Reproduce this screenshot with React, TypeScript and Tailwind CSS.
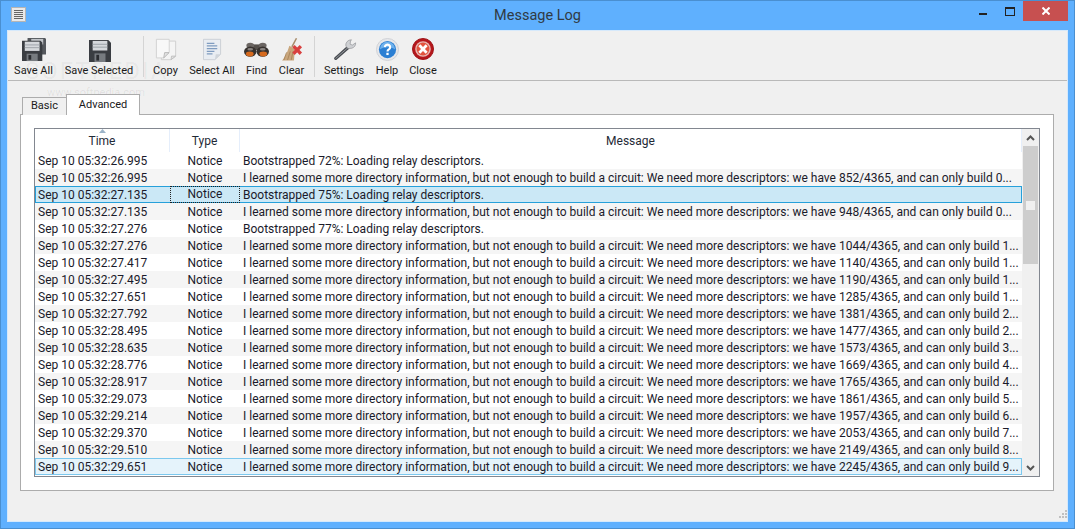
import React from "react";

const long = (have: number, build: number) =>
  `I learned some more directory information, but not enough to build a circuit: We need more descriptors: we have ${have}/4365, and can only build ${build}...`;

const rows: [string, string][] = [
  ["26.995", "Bootstrapped 72%: Loading relay descriptors."],
  ["26.995", long(852, 0)],
  ["27.135", "Bootstrapped 75%: Loading relay descriptors."],
  ["27.135", long(948, 0)],
  ["27.276", "Bootstrapped 77%: Loading relay descriptors."],
  ["27.276", long(1044, 1)],
  ["27.417", long(1140, 1)],
  ["27.495", long(1190, 1)],
  ["27.651", long(1285, 1)],
  ["27.792", long(1381, 2)],
  ["28.495", long(1477, 2)],
  ["28.635", long(1573, 3)],
  ["28.776", long(1669, 4)],
  ["28.917", long(1765, 4)],
  ["29.073", long(1861, 5)],
  ["29.214", long(1957, 6)],
  ["29.370", long(2053, 7)],
  ["29.510", long(2149, 8)],
  ["29.651", long(2245, 9)],
];

function Floppy() {
  return (
    <svg className="ml-[2px] mb-[1px]" width="22" height="23" viewBox="0 0 24 24" preserveAspectRatio="none">
      <path d="M0 1h21l3 3v20H0z" fill="#3a3d42" />
      <rect x="4" y="2" width="16" height="10" fill="#d5d8dc" />
      <rect x="4" y="5" width="16" height="1" fill="#9aa0a6" />
      <rect x="4" y="8" width="16" height="1" fill="#9aa0a6" />
      <rect x="6" y="15" width="12" height="9" fill="#777b80" />
      <rect x="8" y="16.500" width="3" height="6" fill="#2a2c30" />
    </svg>
  );
}

function SaveAllIcon() {
  return (
    <svg className="mb-[1px]" width="24" height="24" viewBox="0 0 26 26" preserveAspectRatio="none">
      <path d="M6 0h19l1 1v17H6z" fill="#55585d" />
      <rect x="10" y="1" width="13" height="6" fill="#c2c5c9" />
      <path d="M0 3h20l2 2v20H0z" fill="#3a3d42" />
      <rect x="3" y="4" width="16" height="10" fill="#d5d8dc" />
      <rect x="3" y="7" width="16" height="1" fill="#9aa0a6" />
      <rect x="3" y="10" width="16" height="1" fill="#9aa0a6" />
      <rect x="5" y="17" width="12" height="8" fill="#777b80" />
      <rect x="7" y="18.500" width="3" height="5" fill="#2a2c30" />
    </svg>
  );
}

function CopyIcon() {
  return (
    <svg className="mb-[2px]" width="22" height="23" viewBox="0 0 24 26" preserveAspectRatio="none">
      <path d="M7 3.500h15.500v17l-5 4H7z" fill="#f4f4f4" stroke="#cdcdcd" />
      <path d="M1.500 1.500h14v14l-6 7h-8z" fill="#f8f8f8" stroke="#cfcfcf" />
      <path d="M9.500 22.500l1-6h5z" fill="#e2e2e2" stroke="#b5b5b5" />
      <path d="M17.500 24.500l.5-4h4.500z" fill="#e2e2e2" stroke="#bdbdbd" />
    </svg>
  );
}

function SelectAllIcon() {
  return (
    <svg className="mb-[2px]" width="19" height="23" viewBox="0 0 20 26" preserveAspectRatio="none">
      <path d="M.5 1.500h18v17l-6 6H.5z" fill="#e9edf2" stroke="#c9ced4" />
      <path d="M12.500 24.500l1-6h5z" fill="#cfd4da" />
      <path d="M4 6h8M4 9h11M4 12h11M4 15h8M4 18h6" stroke="#7f9cc0" strokeWidth="1.400" />
    </svg>
  );
}

function FindIcon() {
  return (
    <svg className="mb-[5px]" width="25" height="16" viewBox="0 0 26 20" preserveAspectRatio="none">
      <path d="M9 3h8v7H9z" fill="#55504c" />
      <ellipse cx="6.500" cy="4.500" rx="4" ry="3.500" fill="#6b6663" />
      <ellipse cx="19.500" cy="4.500" rx="4" ry="3.500" fill="#6b6663" />
      <circle cx="6.500" cy="12" r="6.500" fill="#37322f" />
      <circle cx="19.500" cy="12" r="6.500" fill="#37322f" />
      <ellipse cx="6" cy="15" rx="4" ry="3" fill="#d66a1e" />
      <ellipse cx="20" cy="15" rx="4" ry="3" fill="#d66a1e" />
      <ellipse cx="6.500" cy="9" rx="3" ry="1.500" fill="#8a8582" />
      <ellipse cx="19.500" cy="9" rx="3" ry="1.500" fill="#8a8582" />
    </svg>
  );
}

function ClearIcon() {
  return (
    <svg className="mb-[2px] ml-[3px]" width="23" height="23" viewBox="0 0 25 24" preserveAspectRatio="none">
      <path d="M15 0l1.500.6-5 9-1.500-.8z" fill="#a98d6c" />
      <path d="M8 8l6 3.500-1 12H0c3-3 6-9 8-15.500z" fill="#c9a67c" />
      <path d="M5 15l-3 8M9 14l-3 9M12 14l-2 9" stroke="#a9855c" />
      <path d="M12.500 8.500l8 8M20.500 8.500l-8 8" stroke="#d9403f" strokeWidth="3.600" />
    </svg>
  );
}

function SettingsIcon() {
  return (
    <svg className="mb-[2px] ml-[1px]" width="24" height="23" viewBox="0 0 26 26" preserveAspectRatio="none">
      <path d="M3 23L16 11" stroke="#4a4d52" strokeWidth="3.600" strokeLinecap="round" />
      <path d="M3 23L16 11" stroke="#9a9ea4" strokeWidth="1" strokeLinecap="round" />
      <path d="M20 2a6 6 0 0 0-6 7.500l2.500 2.500 4-.5a6 6 0 0 0 4-6l-3.500 2.500-2.500-1 .5-3.500z" fill="#cfd1d4" stroke="#8a8d91" strokeWidth=".7" />
    </svg>
  );
}

function HelpIcon() {
  return (
    <svg className="mb-[2px]" width="23" height="23" viewBox="0 0 24 24">
      <circle cx="12" cy="12" r="11.500" fill="#e6e7ea" stroke="#cfd1d5" />
      <circle cx="12" cy="12" r="9" fill="#2b7fd3" />
      <path d="M4 12a8 8 0 0 1 16 0c-4-3-12-3-16 0z" fill="#6fb1ec" />
      <path d="M9.200 9.500a2.800 2.600 0 1 1 4.200 2.300c-1 .7-1.400 1.100-1.400 2.200" fill="none" stroke="#fff" strokeWidth="2.200" />
      <rect x="10.800" y="15.400" width="2.400" height="2.400" fill="#fff" />
    </svg>
  );
}

function CloseIcon() {
  return (
    <svg className="mb-[3px]" width="22" height="22" viewBox="0 0 24 24">
      <circle cx="12" cy="12" r="11.500" fill="#b5161b" stroke="#9c1216" />
      <circle cx="12" cy="12" r="8.500" fill="#e7b9b5" />
      <circle cx="12" cy="12" r="7" fill="#e2533e" />
      <path d="M8 8l8 8M16 8l-8 8" stroke="#fff" strokeWidth="3" />
    </svg>
  );
}

function ToolButton({ label, width, icon }: { label: string; width: string; icon: React.ReactNode }) {
  return (
    <div className={`${width} flex flex-col items-center`}>
      <div className="h-[27px] flex items-end justify-center">{icon}</div>
      <span className="text-[11px] leading-[16px] text-[#1a1a1a] whitespace-nowrap">{label}</span>
    </div>
  );
}

export default function App() {
  return (
    <div
      className="relative w-[1075px] h-[529px] overflow-hidden bg-[#5fb0fe] border border-[#4a8fd0] flex flex-col"
      style={{ fontFamily: 'Roboto, "Noto Sans", sans-serif' }}
    >
      {/* Title bar */}
      <div className="relative h-[29px] shrink-0 flex items-center justify-center">
        <div className="absolute left-[10px] top-[6px] w-[15px] h-[15px] bg-[#e9e9e9] border border-[#b5b5b5] flex flex-col items-center justify-center gap-[1px]">
          <div className="w-[9px] h-[1px] bg-[#666]" />
          <div className="w-[9px] h-[1px] bg-[#666]" />
          <div className="w-[9px] h-[1px] bg-[#666]" />
          <div className="w-[9px] h-[1px] bg-[#666]" />
          <div className="w-[9px] h-[1px] bg-[#666]" />
        </div>
        <span className="text-[14.500px] text-[#303a44] mt-[1px]">Message Log</span>
        <div className="absolute left-[978px] top-[12px] w-[8px] h-[2px] bg-[#222]" />
        <div className="absolute left-[1004px] top-[6px] w-[10px] h-[9px] border border-[#222] border-t-[2px]" />
        <div className="absolute left-[1022px] top-0 w-[45px] h-[20px] bg-[#c75050] flex items-center justify-center">
          <svg width="8" height="8" viewBox="0 0 8 8">
            <path d="M.5.5l7 7M7.500.5l-7 7" stroke="#fff" strokeWidth="2" />
          </svg>
        </div>
      </div>

      {/* Client area */}
      <div className="mx-[6px] mb-[6px] flex-1 min-h-0 bg-[#f0f0f0] border border-[#d6e9fb] flex flex-col">
        {/* Toolbar */}
        <div className="h-[50px] shrink-0 border-b border-[#b9b9b9] flex pt-[5px]">
          <ToolButton label="Save All" width="w-[51px]" icon={<SaveAllIcon />} />
          <ToolButton label="Save Selected" width="w-[80px]" icon={<Floppy />} />
          <div className="w-[1px] h-[41px] bg-[#d4d4d4] ml-[4px] mr-[3px]" />
          <ToolButton label="Copy" width="w-[37px]" icon={<CopyIcon />} />
          <ToolButton label="Select All" width="w-[56px]" icon={<SelectAllIcon />} />
          <ToolButton label="Find" width="w-[33px]" icon={<FindIcon />} />
          <ToolButton label="Clear" width="w-[37px]" icon={<ClearIcon />} />
          <div className="w-[1px] h-[41px] bg-[#d4d4d4] ml-[4px] mr-[3px]" />
          <ToolButton label="Settings" width="w-[52px]" icon={<SettingsIcon />} />
          <ToolButton label="Help" width="w-[34px]" icon={<HelpIcon />} />
          <ToolButton label="Close" width="w-[38px]" icon={<CloseIcon />} />
        </div>

        {/* Tabs */}
        <div className="flex-1 min-h-0 pl-[12px] pr-[13px] pt-[12px] pb-[30px] flex flex-col">
          <div className="relative z-10 h-[21px] shrink-0 flex items-end pl-[2px]">
            <div className="w-[45px] h-[18px] -mb-[1px] bg-[#f0f0f0] border border-[#acacac] border-b-0 text-[11px] leading-[16px] text-center text-[#1a1a1a]">
              Basic
            </div>
            <div className="-ml-[1px] w-[74px] h-[21px] -mb-[1px] bg-white border border-[#acacac] border-b-0 text-[11px] leading-[20px] text-center text-[#1a1a1a]">
              Advanced
            </div>
          </div>
          <div className="flex-1 min-h-0 bg-white border border-[#acacac] p-[13px]">
            {/* Log table */}
            <div className="h-full border border-[#828790] flex text-[12px] text-[#1a1a2a]">
              <div className="flex-1 min-w-0 flex flex-col">
                <div className="relative h-[23px] shrink-0 flex leading-[23px] text-[#1f2a36]">
                  <div className="w-[135px] border-r border-[#e5eefb] text-center pt-[1px]">Time</div>
                  <div className="w-[70px] border-r border-[#e5eefb] text-center pt-[1px]">Type</div>
                  <div className="flex-1 border-r border-[#e5eefb] text-center pt-[1px]">Message</div>
                  <svg className="absolute left-[64px] top-0" width="7" height="4" viewBox="0 0 7 4">
                    <path d="M3.500 0L7 4H0z" fill="#9cb4c9" />
                  </svg>
                </div>
                {rows.map(([time, msg], i) => {
                  const active = i === 2;
                  const last = i === rows.length - 1;
                  return (
                    <div
                      key={i}
                      className={
                        "relative h-[17px] shrink-0 flex leading-[17px] whitespace-nowrap " +
                        (active
                          ? "bg-[#cbe8f6] shadow-[inset_0_0_0_1px_#26a0da]"
                          : last
                            ? "bg-[#e5f3fb] shadow-[inset_0_0_0_1px_#7cc8ee]"
                            : i % 2 === 1
                              ? "bg-[#f5f5f5]"
                              : "bg-white")
                      }
                    >
                      <div className="w-[135px] shrink-0 pl-[3px] pt-[1px] leading-[16px]">Sep 10 05:32:{time}</div>
                      <div
                        className={
                          "w-[70px] h-[17px] shrink-0 text-center " +
                          (active
                            ? "border border-dotted border-[#222] leading-[15px]"
                            : "pt-[1px] leading-[16px]")
                        }
                      >
                        Notice
                      </div>
                      <div className="flex-1 min-w-0 overflow-hidden pl-[3px] pt-[1px] leading-[16px]">{msg}</div>
                    </div>
                  );
                })}
              </div>
              {/* Scrollbar */}
              <div className="w-[17px] shrink-0 flex flex-col bg-[#f0f0f0]">
                <div className="h-[17px] flex items-center justify-center">
                  <svg width="9" height="6" viewBox="0 0 9 6">
                    <path d="M1 5l3.500-3.500L8 5" fill="none" stroke="#555" strokeWidth="2" />
                  </svg>
                </div>
                <div className="mx-[1px] h-[118px] bg-[#cdcdcd] flex items-center justify-center">
                  <div className="w-[9px] h-[9px] bg-[#f0f0f0]" />
                </div>
                <div className="flex-1" />
                <div className="h-[17px] flex items-center justify-center">
                  <svg width="9" height="6" viewBox="0 0 9 6">
                    <path d="M1 1l3.500 3.500L8 1" fill="none" stroke="#555" strokeWidth="2" />
                  </svg>
                </div>
              </div>
            </div>
          </div>
        </div>
      </div>

      {/* Watermark */}
      <span className="absolute left-[24px] top-[56px] text-[24px] leading-[28px] tracking-[2px] text-black/[0.05] pointer-events-none">
        SOFTPEDIA
      </span>
      <span className="absolute left-[46px] top-[85px] text-[11px] leading-[14px] text-black/[0.08] pointer-events-none">
        www.softpedia.com
      </span>

      {/* Resize grip */}
      <svg className="absolute left-[1058px] top-[509px]" width="9" height="9" viewBox="0 0 9 9">
        <path d="M6 0h2v2H6zM3 3h2v2H3zM6 3h2v2H6zM0 6h2v2H0zM3 6h2v2H3zM6 6h2v2H6z" fill="#c0c0c0" />
      </svg>
    </div>
  );
}
